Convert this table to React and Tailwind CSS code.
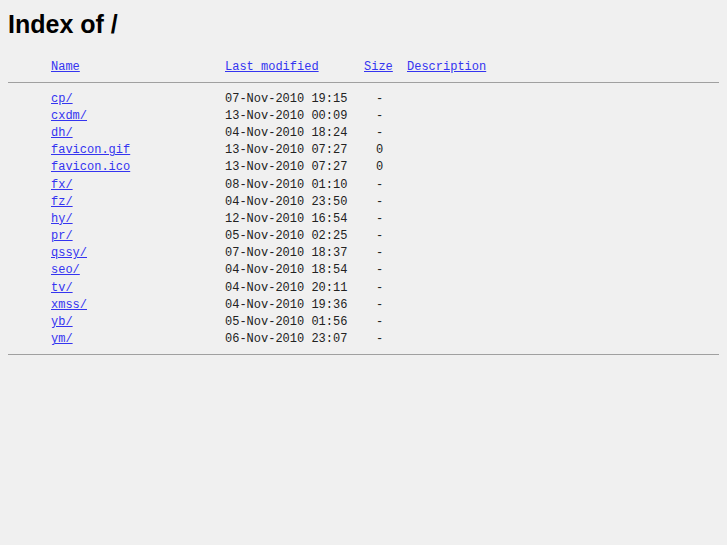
import React from "react";

const rows = [
  ["cp/", "07-Nov-2010 19:15", "-"],
  ["cxdm/", "13-Nov-2010 00:09", "-"],
  ["dh/", "04-Nov-2010 18:24", "-"],
  ["favicon.gif", "13-Nov-2010 07:27", "0"],
  ["favicon.ico", "13-Nov-2010 07:27", "0"],
  ["fx/", "08-Nov-2010 01:10", "-"],
  ["fz/", "04-Nov-2010 23:50", "-"],
  ["hy/", "12-Nov-2010 16:54", "-"],
  ["pr/", "05-Nov-2010 02:25", "-"],
  ["qssy/", "07-Nov-2010 18:37", "-"],
  ["seo/", "04-Nov-2010 18:54", "-"],
  ["tv/", "04-Nov-2010 20:11", "-"],
  ["xmss/", "04-Nov-2010 19:36", "-"],
  ["yb/", "05-Nov-2010 01:56", "-"],
  ["ym/", "06-Nov-2010 23:07", "-"],
];

const link = "text-[#3434f0] underline";

export default function App() {
  return (
    <div className="min-h-[545px] bg-[#f0f0f0] px-2 pt-[6px] text-black">
      <h1 className="m-0 text-[25px] font-bold leading-[36px] font-['Liberation_Sans',Arial,sans-serif]">
        Index of /
      </h1>
      <div className="mt-[16px] font-['Liberation_Mono','Courier_New',monospace] text-[12px] text-[#222]">
        <div className="flex h-[17px] items-center pl-[43px]">
          <span className="w-[174px]"><a className={link}>Name</a></span>
          <span className="w-[139px]"><a className={link}>Last modified</a></span>
          <span className="w-[43px]"><a className={link}>Size</a></span>
          <span><a className={link}>Description</a></span>
        </div>
        <hr className="my-[7px] border-0 border-t border-[#a0a0a0]" />
        <div className="flex flex-col">
          {rows.map(([n, d, s]) => (
            <div key={n} className="flex h-[17.2px] items-center whitespace-pre pl-[43px]">
              <span className="w-[174px]"><a className={link}>{n}</a></span>
              <span className="w-[151px]">{d}</span>
              <span>{s}</span>
            </div>
          ))}
        </div>
        <hr className="my-[6px] border-0 border-t border-[#a0a0a0]" />
      </div>
    </div>
  );
}
